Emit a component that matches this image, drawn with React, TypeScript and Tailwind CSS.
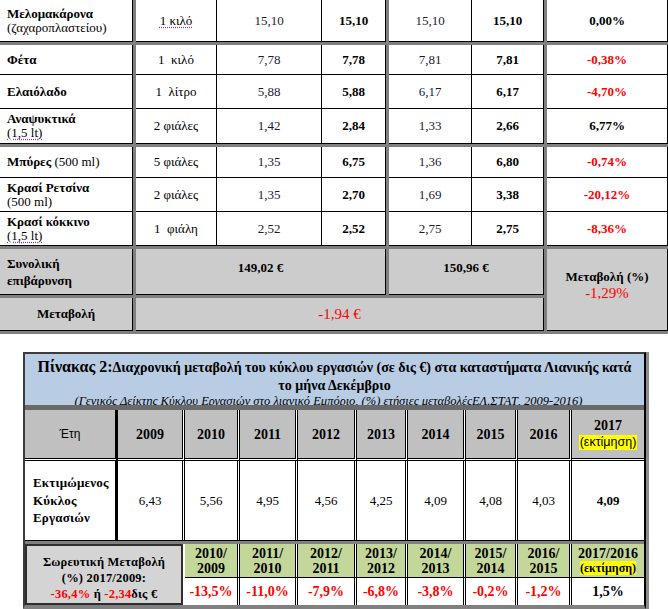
import React from "react";

const serif = "font-['Liberation_Serif','Times_New_Roman',serif]";

type Item = {
  name: string;
  note?: string;
  sub?: string;
  subDotted?: boolean;
  qty: string;
  qtyDotted?: boolean;
  price: string;
  total: string;
  price2: string;
  total2: string;
  change: string;
  red?: boolean;
};

// products grouped the way the thick grey rules split them
const groups: Item[][] = [
  [
    {
      name: "Μελομακάρονα",
      sub: "(ζαχαροπλαστείου)",
      qty: "1 κιλό",
      qtyDotted: true,
      price: "15,10",
      total: "15,10",
      price2: "15,10",
      total2: "15,10",
      change: "0,00%",
    },
  ],
  [
    { name: "Φέτα", qty: "1  κιλό", price: "7,78", total: "7,78", price2: "7,81", total2: "7,81", change: "-0,38%", red: true },
    { name: "Ελαιόλαδο", qty: "1  λίτρο", price: "5,88", total: "5,88", price2: "6,17", total2: "6,17", change: "-4,70%", red: true },
    { name: "Αναψυκτικά", sub: "(1,5 lt)", subDotted: true, qty: "2 φιάλες", price: "1,42", total: "2,84", price2: "1,33", total2: "2,66", change: "6,77%" },
  ],
  [
    { name: "Μπύρες", note: " (500 ml)", qty: "5 φιάλες", price: "1,35", total: "6,75", price2: "1,36", total2: "6,80", change: "-0,74%", red: true },
    { name: "Κρασί Ρετσίνα", sub: "(500 ml)", qty: "2 φιάλες", price: "1,35", total: "2,70", price2: "1,69", total2: "3,38", change: "-20,12%", red: true },
    { name: "Κρασί κόκκινο", sub: "(1,5 lt)", subDotted: true, qty: "1  φιάλη", price: "2,52", total: "2,52", price2: "2,75", total2: "2,75", change: "-8,36%", red: true },
  ],
];

const years = ["2009", "2010", "2011", "2012", "2013", "2014", "2015", "2016"];
const turnover = ["6,43", "5,56", "4,95", "4,56", "4,25", "4,09", "4,08", "4,03"];
const periods = [
  ["2010/", "2009"],
  ["2011/", "2010"],
  ["2012/", "2011"],
  ["2013/", "2012"],
  ["2014/", "2013"],
  ["2015/", "2014"],
  ["2016/", "2015"],
];
const changes = ["-13,5%", "-11,0%", "-7,9%", "-6,8%", "-3,8%", "-0,2%", "-1,2%"];

const cell = "bg-white border-r border-b border-black flex items-center justify-center text-[13px]";
const dotted = "underline decoration-dotted decoration-[#8a3fb0] underline-offset-2";

function BasketTable() {
  return (
    <div className="grid grid-cols-[133px_3px_81px_105px_64px_3px_83px_72px_3px_121px] grid-rows-[42px_3px_30px_34px_35px_3px_31px_34px_34px_3px_46px_3px_33px_3px] bg-[#808080]">
      {groups.map((group, g) => (
        <React.Fragment key={g}>
          {group.map((it) => (
            <React.Fragment key={it.name}>
              <div className="bg-white border-r border-b border-black flex flex-col justify-center px-[7px] text-[13px] leading-[14px]">
                <div>
                  <span className="font-bold">{it.name}</span>
                  {it.note && <span>{it.note}</span>}
                </div>
                {it.sub && (
                  <div>
                    <span className={it.subDotted ? dotted : ""}>{it.sub}</span>
                  </div>
                )}
              </div>
              <div />
              <div className={cell}>
                <span className={`whitespace-pre ${it.qtyDotted ? dotted : ""}`}>{it.qty}</span>
              </div>
              <div className={`${cell} text-[#1a1a38]`}>{it.price}</div>
              <div className={`${cell} font-bold`}>{it.total}</div>
              <div />
              <div className={`${cell} text-[#1a1a38]`}>{it.price2}</div>
              <div className={`${cell} font-bold`}>{it.total2}</div>
              <div />
              <div className={`${cell} font-bold ${it.red ? "text-[#ff0000]" : ""}`}>{it.change}</div>
            </React.Fragment>
          ))}
          <div className="col-span-10" />
        </React.Fragment>
      ))}

      {/* totals */}
      <div className="bg-[#cccccc] border-r border-b border-black flex flex-col justify-center px-[7px] text-[13px] leading-[17px] font-bold">
        <div>Συνολική</div>
        <div>επιβάρυνση</div>
      </div>
      <div />
      <div className="col-span-3 bg-[#cccccc] border-r border-b border-black flex items-center justify-center pb-[8px] text-[13px] font-bold">
        149,02 €
      </div>
      <div />
      <div className="col-span-2 bg-[#cccccc] border-r border-b border-black flex items-center justify-center pb-[8px] text-[13px] font-bold">
        150,96 €
      </div>
      <div />
      <div className="row-span-3 bg-[#cccccc] border-r border-b border-black flex flex-col items-center justify-center pb-[10px] leading-[16px]">
        <div className="text-[13px] font-bold">Μεταβολή (%)</div>
        <div className="text-[15px] text-[#ff0000]">-1,29%</div>
      </div>

      <div className="col-span-9" />

      <div className="bg-[#cccccc] border-r border-b border-black flex items-center justify-center text-[13px] font-bold">
        Μεταβολή
      </div>
      <div />
      <div className="col-span-6 bg-[#cccccc] border-r border-b border-black flex items-center justify-center text-[15px] text-[#ff0000]">
        -1,94 €
      </div>
      <div />
      <div className="col-span-10" />
    </div>
  );
}

function TurnoverTable() {
  return (
    <div className="ml-[23px] w-[623px] border-l-2 border-t-2 border-[#3c3c3c] border-r-2 border-r-black border-b-4 border-b-[#808080] shadow-[3px_0_0_#8c8c8c] bg-white">
      <div className="h-[56px] bg-[#b8cce4] border-b-[5px] border-[#6a6a6a] overflow-hidden pt-[3px] text-center text-black">
        <div className="h-[20px] leading-[20px] whitespace-nowrap font-bold text-[14px]">
          <span className="text-[16px]">Πίνακας 2:</span>Διαχρονική μεταβολή του κύκλου εργασιών (σε δις €) στα καταστήματα Λιανικής κατά
        </div>
        <div className="h-[17px] leading-[17px] font-bold text-[14px]">το μήνα Δεκέμβριο</div>
        <div className="leading-[14px] italic text-[12.5px] whitespace-nowrap pr-[12px]">
          (Γενικός Δείκτης Κύκλου Εργασιών στο λιανικό Εμπόριο, (%) ετήσιες μεταβολέςΕΛ.ΣΤΑΤ, 2009-2016)
        </div>
      </div>

      <div className="grid grid-cols-[93px_67px_55px_58px_59px_51px_58px_52px_54px_72px]">
        {/* header */}
        <div className="h-[51px] bg-[#c0c0c0] border-r-[3px] border-b-[3px] border-black [border-bottom-style:double] bg-clip-padding flex items-center justify-center font-['Liberation_Sans',Arial,sans-serif] text-[12px]">
          Έτη
        </div>
        {years.map((y) => (
          <div
            key={y}
            className="h-[51px] bg-[#c0c0c0] bg-clip-padding border-r-[3px] border-b-[3px] border-double border-black flex items-center justify-center text-[14px] font-bold"
          >
            {y}
          </div>
        ))}
        <div className="h-[51px] bg-[#c0c0c0] bg-clip-padding border-b-[3px] border-double border-black flex flex-col items-center justify-center pb-[2px]">
          <div className="text-[14px] font-bold leading-[18px]">2017</div>
          <div className="bg-[#ffff00] px-[1px] font-['Liberation_Sans',Arial,sans-serif] text-[12.5px] leading-[15px]">
            (εκτίμηση)
          </div>
        </div>

        {/* estimated turnover */}
        <div className="h-[80px] border-r-[3px] border-b border-black flex flex-col justify-center pl-[8px] text-[13px] leading-[17.5px] font-bold tracking-[0.2px]">
          <div>Εκτιμώμενος</div>
          <div>Κύκλος</div>
          <div>Εργασιών</div>
        </div>
        {turnover.map((v, i) => (
          <div
            key={i}
            className="h-[80px] bg-clip-padding border-r-[3px] border-b border-double border-black flex items-center justify-center text-[13px]"
          >
            {v}
          </div>
        ))}
        <div className="h-[80px] border-b border-black flex items-center justify-center text-[13px] font-bold">4,09</div>

        <div className="col-span-10 h-[3px] bg-[#808080]" />

        {/* cumulative change */}
        <div className="col-span-2 row-span-2 bg-[#d4d4d4] border-2 border-[#2e2e2e] mr-[2px] flex flex-col items-center justify-center pt-[6px] text-[12.5px] font-bold leading-[16px] tracking-[0.2px]">
          <div>Σωρευτική Μεταβολή</div>
          <div>(%) 2017/2009:</div>
          <div>
            <span className="text-[#ff0000]">-36,4%</span> ή <span className="text-[#ff0000]">-2,34</span>δις €
          </div>
        </div>
        {periods.map((p, i) => (
          <div
            key={i}
            className="h-[34px] bg-[#c4d79b] bg-clip-padding border-r-[3px] border-b border-double border-black flex flex-col items-center justify-center text-[14px] font-bold leading-[15px]"
          >
            <div>{p[0]}</div>
            <div>{p[1]}</div>
          </div>
        ))}
        <div className="h-[34px] bg-[#c4d79b] border-b border-black flex flex-col items-center justify-center text-[14px] font-bold leading-[15px]">
          <div>2017/2016</div>
          <div className="bg-[#ffff00] text-[12px] leading-[14px]">(εκτίμηση)</div>
        </div>

        {changes.map((c, i) => (
          <div
            key={i}
            className="h-[27px] bg-white bg-clip-padding border-r-[3px] border-double border-black flex items-center justify-center text-[14px] font-bold text-[#ff0000]"
          >
            {c}
          </div>
        ))}
        <div className="h-[27px] bg-white flex items-center justify-center text-[14px] font-bold">1,5%</div>
      </div>
    </div>
  );
}

export default function App() {
  return (
    <div className={`w-[668px] h-[609px] overflow-hidden bg-white text-black ${serif}`}>
      <BasketTable />
      <div className="h-[18px]" />
      <TurnoverTable />
    </div>
  );
}
